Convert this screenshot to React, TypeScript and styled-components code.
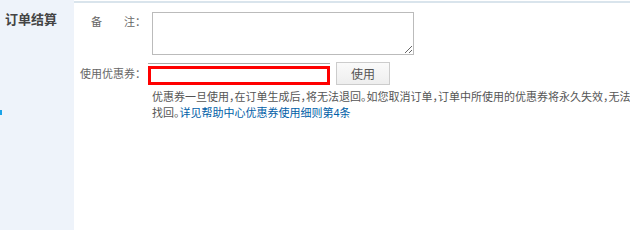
import React from 'react';
import styled, { createGlobalStyle } from 'styled-components';

const GlobalStyle = createGlobalStyle`
  html, body {
    margin: 0;
    padding: 0;
    background: #fff;
  }
  body {
    font-family: "Liberation Sans", "Noto Sans CJK SC", sans-serif;
    font-size: 11px;
    color: #666;
    overflow: hidden;
  }
`;

const Wrapper = styled.div`
  display: flex;
  width: 630px;
  height: 230px;
`;

const Sidebar = styled.div`
  position: relative;
  width: 74px;
  flex-shrink: 0;
  background-color: #eef3fa;
  padding: 11px 0 0 5px;
  box-sizing: border-box;
`;

const Title = styled.h3`
  margin: 0;
  font-size: 13px;
  font-weight: bold;
  color: #444;
  line-height: 18px;
`;

const Marker = styled.span`
  position: absolute;
  left: 0;
  top: 110px;
  width: 2px;
  height: 5px;
  background-color: #1aa3e8;
`;

const Main = styled.div`
  flex: 1;
  margin-top: 1px;
  border-top: 2px solid #d9e4ec;
  padding-top: 9px;
`;

const Row = styled.div<{ align?: string }>`
  display: flex;
  align-items: ${(p) => p.align || 'flex-start'};
`;

const Label = styled.div<{ top?: number }>`
  width: 72px;
  flex-shrink: 0;
  white-space: nowrap;
  text-align: right;
  color: #666;
  line-height: 16px;
  padding-top: ${(p) => p.top || 0}px;
`;

const Remark = styled.textarea`
  margin: 0 0 0 6px;
  width: 262px;
  height: 43px;
  box-sizing: border-box;
  border: 1px solid #bbb;
  padding: 2px;
  font-family: inherit;
  font-size: 12px;
`;

const CouponRow = styled(Row)`
  margin-top: 7px;
`;

const CouponBox = styled.div`
  margin-left: 2px;
  width: 182px;
  height: 22px;
  border-top: 1px solid #aaa;
  padding-top: 2px;
  box-sizing: border-box;
`;

const CouponInput = styled.input`
  display: block;
  width: 182px;
  height: 19px;
  margin: 0;
  box-sizing: border-box;
  border: 3px solid #f00;
  padding: 0 2px;
  outline: none;
`;

const UseButton = styled.button`
  margin-left: 6px;
  width: 54px;
  height: 23px;
  border: 1px solid #ccc;
  background: linear-gradient(#fafafa, #eee);
  color: #555;
  font-family: "Liberation Sans", "Noto Sans CJK SC", sans-serif;
  font-size: 12px;
  padding: 0;
`;

const Notice = styled.p`
  margin: 4px 0 0 78px;
  white-space: nowrap;
  color: #555;
  line-height: 16px;
  font-size: 11px;
  font-feature-settings: "halt";
`;

const Link = styled.a`
  color: #005ea7;
  text-decoration: none;
`;

const App: React.FC = () => (
  <>
    <GlobalStyle />
    <Wrapper>
      <Sidebar>
        <Title>订单结算</Title>
        <Marker />
      </Sidebar>
      <Main>
        <Row>
          <Label top={2}>备　　注：</Label>
          <Remark />
        </Row>
        <CouponRow align="center">
          <Label>使用优惠券：</Label>
          <CouponBox>
            <CouponInput type="text" />
          </CouponBox>
          <UseButton type="button">使用</UseButton>
        </CouponRow>
        <Notice>
          优惠券一旦使用，在订单生成后，将无法退回。如您取消订单，订单中所使用的优惠券将永久失效，无法
          <br />
          找回。<Link href="#">详见帮助中心优惠券使用细则第4条</Link>
        </Notice>
      </Main>
    </Wrapper>
  </>
);

export default App;
